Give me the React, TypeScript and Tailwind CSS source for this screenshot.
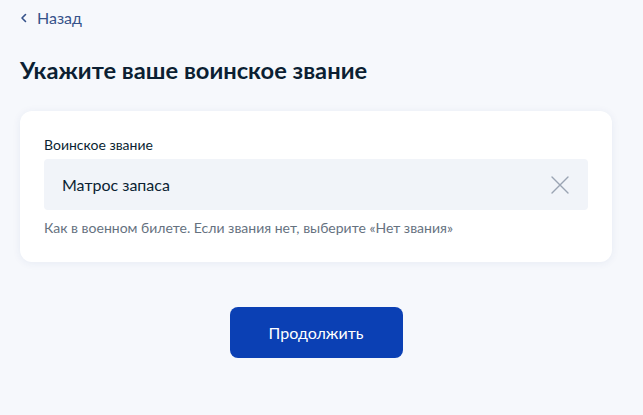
import React from "react";

export default function App() {
  return (
    <div className="min-h-[415px] w-full bg-[#f6f8fc] px-5 pt-[8px] font-['Lato',sans-serif] text-[#0b1f33]">
      <a className="flex h-5 items-center gap-[9px] text-[16px] leading-5 text-[#35528a]" href="#">
        <svg width="8" height="10" viewBox="0 0 8 10" fill="none">
          <path d="M5.5 1.5L2 5l3.5 3.5" stroke="#35528a" strokeWidth="1.6" strokeLinecap="round" strokeLinejoin="round" />
        </svg>
        <span>Назад</span>
      </a>
      <h1 className="mt-[28px] text-[23.7px] font-bold leading-[28px] text-[#0b1f33]">
        Укажите ваше воинское звание
      </h1>
      <div className="mt-[27px] w-[592px] rounded-[12px] bg-white px-6 pb-[24px] pt-[24px] shadow-[0_1px_8px_rgba(30,60,130,0.07)]">
        <div className="text-[14px] leading-5 text-[#0b1f33]">Воинское звание</div>
        <div className="mt-[4px] flex h-[51px] items-center justify-between rounded-[4px] bg-[#f1f4f9] pl-[18px] pr-[19px]">
          <span className="text-[16px] text-[#0b1f33]">Матрос запаса</span>
          <svg width="18" height="18" viewBox="0 0 18 18" fill="none">
            <path d="M1 1l16 16M17 1L1 17" stroke="#9aa4b3" strokeWidth="1.4" strokeLinecap="round" />
          </svg>
        </div>
        <div className="mt-[8px] text-[14px] leading-5 text-[#66727f]">
          Как в военном билете. Если звания нет, выберите «Нет звания»
        </div>
      </div>
      <div className="mt-[45px] flex w-[592px] justify-center">
        <button className="h-[51px] w-[173px] rounded-[8px] bg-[#0b40b4] text-[16px] text-white">
          Продолжить
        </button>
      </div>
    </div>
  );
}
